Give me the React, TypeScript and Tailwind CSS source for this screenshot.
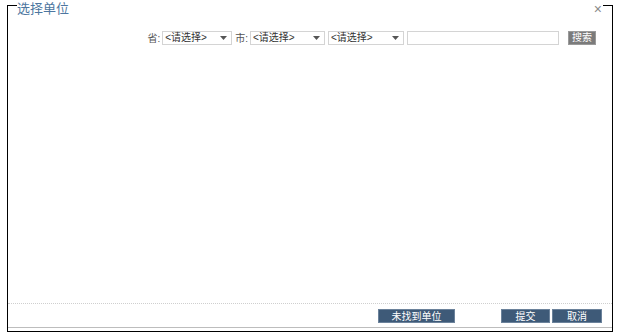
import React from "react";

const font = { fontFamily: '"Liberation Sans", "Noto Sans CJK SC", sans-serif' };

function Select({ w }: { w: string }) {
  return (
    <div className={`${w} h-[14px] border border-[#d4d4d4] bg-white flex items-center justify-between pl-[2px] pr-[4px]`}>
      <span className="text-[10px] leading-none text-[#333]">&lt;请选择&gt;</span>
      <svg width="7" height="4" viewBox="0 0 7 4" className="block">
        <path d="M0 0 L7 0 L3.5 4 Z" fill="#555" />
      </svg>
    </div>
  );
}

export default function App() {
  return (
    <div className="w-[618px] h-[335px] bg-white overflow-hidden" style={font}>
      <div className="ml-[7px] mt-[5px] w-[606px] h-[327px] border border-black flex flex-col">
        <div className="-mt-[6px] mx-[9px] h-[18px] bg-white flex items-start justify-between">
          <span className="text-[13px] leading-[17px] text-[#4d76a0]">选择单位</span>
          <span className="text-[14px] leading-[14px] mt-[2px] mr-[1px] text-[#8a8a8a]">×</span>
        </div>
        <div className="mt-[13px] h-[14px] flex items-center justify-end pr-[16px]">
          <span className="text-[10px] text-[#555] mr-[2px]">省:</span>
          <Select w="w-[70px]" />
          <span className="text-[10px] text-[#555] ml-[3px] mr-[2px]">市:</span>
          <Select w="w-[75px]" />
          <div className="w-[3px]" />
          <Select w="w-[76px]" />
          <div className="w-[3px]" />
          <div className="w-[152px] h-[14px] border border-[#d4d4d4] bg-white" />
          <div className="w-[9px]" />
          <div className="w-[28px] h-[14px] bg-[#7b7b7b] border border-[#9a9a9a] text-white text-[10px] leading-[12px] flex items-center justify-center">搜索</div>
        </div>
        <div className="flex-1" />
        <div className="border-t border-dotted border-[#cfcfcf]" />
        <div className="pt-[5px] h-[19px] flex items-start justify-end pr-[10px]">
          <div className="w-[77px] h-[14px] bg-[#3e5a78] border border-[#6b829b] text-white text-[10px] flex items-center justify-center">未找到单位</div>
          <div className="w-[46px]" />
          <div className="w-[49px] h-[14px] bg-[#3e5a78] border border-[#6b829b] text-white text-[10px] flex items-center justify-center">提交</div>
          <div className="w-[2px]" />
          <div className="w-[50px] h-[14px] bg-[#3e5a78] border border-[#6b829b] text-white text-[10px] flex items-center justify-center">取消</div>
        </div>
        <div className="mt-[4px] border-t border-[#bdbdbd]" />
        <div className="h-[3px]" />
      </div>
    </div>
  );
}
